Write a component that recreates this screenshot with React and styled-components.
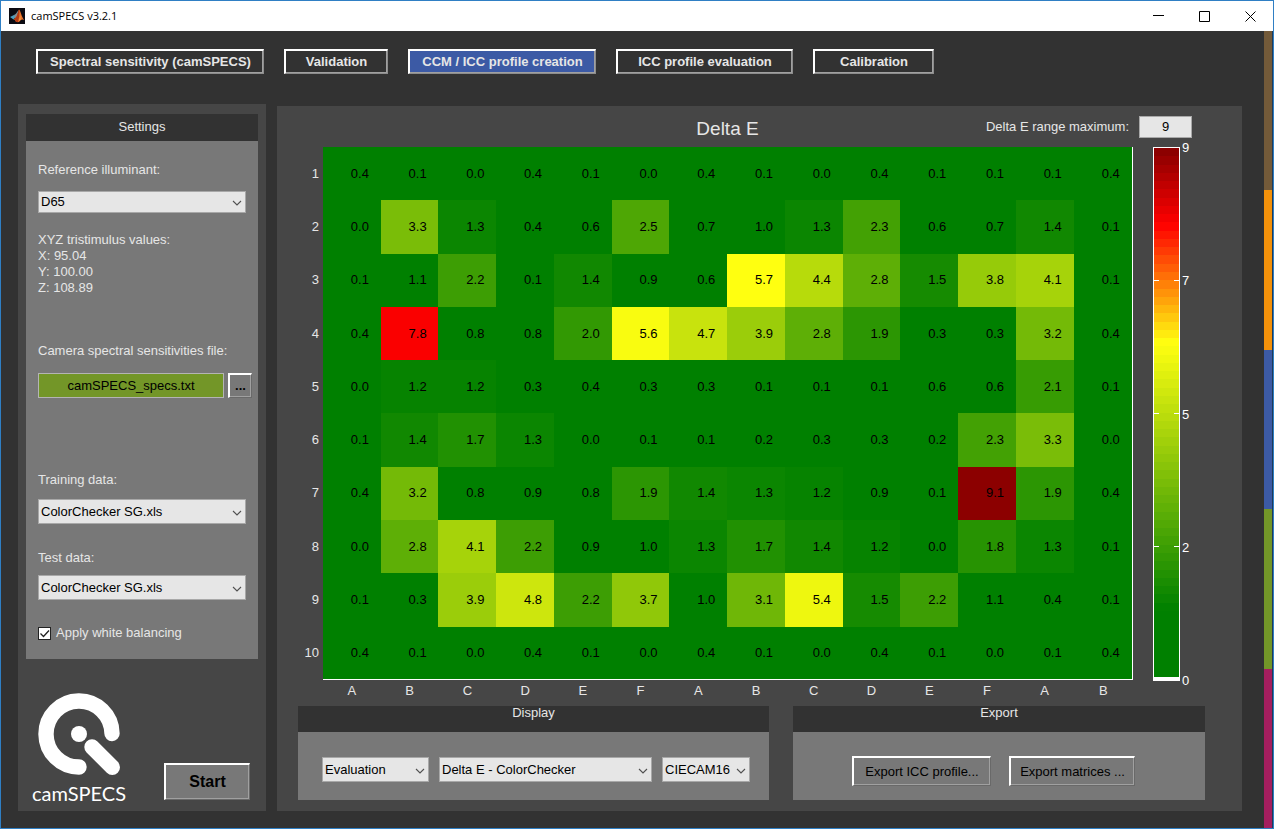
import React, { useState } from 'react'
import styled, { createGlobalStyle } from 'styled-components'

const TABS = [
  { name: 'Spectral sensitivity (camSPECS)', width: 228 },
  { name: 'Validation', width: 104 },
  { name: 'CCM / ICC profile creation', width: 188 },
  { name: 'ICC profile evaluation', width: 177 },
  { name: 'Calibration', width: 121 },
]

const COLUMNS = ['A', 'B', 'C', 'D', 'E', 'F', 'A', 'B', 'C', 'D', 'E', 'F', 'A', 'B']

const DELTA_E = [
  [0.4, 0.1, 0.0, 0.4, 0.1, 0.0, 0.4, 0.1, 0.0, 0.4, 0.1, 0.1, 0.1, 0.4],
  [0.0, 3.3, 1.3, 0.4, 0.6, 2.5, 0.7, 1.0, 1.3, 2.3, 0.6, 0.7, 1.4, 0.1],
  [0.1, 1.1, 2.2, 0.1, 1.4, 0.9, 0.6, 5.7, 4.4, 2.8, 1.5, 3.8, 4.1, 0.1],
  [0.4, 7.8, 0.8, 0.8, 2.0, 5.6, 4.7, 3.9, 2.8, 1.9, 0.3, 0.3, 3.2, 0.4],
  [0.0, 1.2, 1.2, 0.3, 0.4, 0.3, 0.3, 0.1, 0.1, 0.1, 0.6, 0.6, 2.1, 0.1],
  [0.1, 1.4, 1.7, 1.3, 0.0, 0.1, 0.1, 0.2, 0.3, 0.3, 0.2, 2.3, 3.3, 0.0],
  [0.4, 3.2, 0.8, 0.9, 0.8, 1.9, 1.4, 1.3, 1.2, 0.9, 0.1, 9.1, 1.9, 0.4],
  [0.0, 2.8, 4.1, 2.2, 0.9, 1.0, 1.3, 1.7, 1.4, 1.2, 0.0, 1.8, 1.3, 0.1],
  [0.1, 0.3, 3.9, 4.8, 2.2, 3.7, 1.0, 3.1, 5.4, 1.5, 2.2, 1.1, 0.4, 0.1],
  [0.4, 0.1, 0.0, 0.4, 0.1, 0.0, 0.4, 0.1, 0.0, 0.4, 0.1, 0.0, 0.1, 0.4],
]

const TICKS = [9, 7, 5, 2, 0]
const STEPS = 64

// green -> yellow -> red -> dark red, stops are given for a range of 0..9
const STOPS = [
  [0, [0, 128, 0]],
  [1.1, [0, 128, 0]],
  [5.7, [255, 255, 16]],
  [7.75, [255, 0, 0]],
  [9, [140, 0, 0]],
]

function heat(value) {
  const v = Math.min(Math.max(value, 0), 9)
  const i = Math.max(1, STOPS.findIndex(([at]) => v <= at))
  const [from, a] = STOPS[i - 1]
  const [to, b] = STOPS[i]
  const t = (v - from) / (to - from)
  return `rgb(${a.map((c, n) => Math.round(c + (b[n] - c) * t)).join(',')})`
}

const BANDS = Array.from({ length: STEPS }, (_, i) => heat(9 - (i * 9) / (STEPS - 1)))

function Dropdown({ id, label, options, height, width }) {
  return (
    <SelectBox $width={width}>
      <Select id={id} aria-label={label} $height={height}>
        {options.map((o) => <option key={o}>{o}</option>)}
      </Select>
      <Chevron viewBox="0 0 10 6" aria-hidden="true">
        <path d="M1 1l4 4 4-4" fill="none" stroke="#505050" strokeWidth="1.1" />
      </Chevron>
    </SelectBox>
  )
}

function TitleBar() {
  return (
    <Bar>
      <svg width="16" height="16" viewBox="0 0 16 16" aria-hidden="true">
        <rect width="16" height="16" fill="#0b0b12" />
        <path d="M1 9l4-2 2 1.500-2.500 3z" fill="#4d9fc0" />
        <path d="M5 7c2-.5 3-3 4.500-5L8 9l-2 2z" fill="#7d8e98" />
        <path d="M10 1.500c1.500 1 2.500 7 5 10.500-2-1.200-3-.6-4.500 1.500C9.500 14.500 8.500 14 7 14c-.4-1.500-1.200-2.200-2.500-2.500C8 9.500 8.800 5 10 1.500z" fill="#e8702a" />
        <path d="M10 1.500c.9 2 .5 7-1 12.500-.6.200-1.200 0-2 0-.4-1.500-1.200-2.200-2.500-2.500C8 9.500 8.800 5 10 1.500z" fill="#b23a14" />
        <path d="M10.500 4c.8 3 .7 6-.5 9l1.500-1.500c-.1-2.500-.2-5-1-7.500z" fill="#f9b64a" />
      </svg>
      <AppName>camSPECS v3.2.1</AppName>
      <WindowButton aria-label="Minimize">
        <svg width="11" height="11" viewBox="0 0 11 11"><path d="M0 4.500h11" stroke="#000" /></svg>
      </WindowButton>
      <WindowButton aria-label="Maximize">
        <svg width="11" height="11" viewBox="0 0 11 11"><path d="M.5.5h10v10H.5z" fill="none" stroke="#000" /></svg>
      </WindowButton>
      <WindowButton aria-label="Close">
        <svg width="11" height="11" viewBox="0 0 11 11"><path d="M.5.5l10 10M10.500.5l-10 10" stroke="#000" /></svg>
      </WindowButton>
    </Bar>
  )
}

function Settings() {
  const [balance, setBalance] = useState(true)

  return (
    <Sidebar>
      <GroupHeader $height={27} $line={25}>Settings</GroupHeader>
      <SettingsBody>
        <Field $top={21} $gap={13}>
          <label htmlFor="illuminant">Reference illuminant:</label>
          <Dropdown id="illuminant" options={['D65', 'D50', 'A']} height={22} />
        </Field>
        <Field $top={19}>
          <div>XYZ tristimulus values:</div>
          <div>X: 95.04</div>
          <div>Y: 100.00</div>
          <div>Z: 108.89</div>
        </Field>
        <Field $top={47} $gap={14}>
          <label htmlFor="specs">Camera spectral sensitivities file:</label>
          <FileRow>
            <FileInput id="specs" readOnly value="camSPECS_specs.txt" />
            <BrowseButton aria-label="Browse">...</BrowseButton>
          </FileRow>
        </Field>
        <Field $top={74} $gap={11}>
          <label htmlFor="training">Training data:</label>
          <Dropdown id="training" options={['ColorChecker SG.xls']} height={25} />
        </Field>
        <Field $top={26} $gap={9}>
          <label htmlFor="test">Test data:</label>
          <Dropdown id="test" options={['ColorChecker SG.xls']} height={25} />
        </Field>
        <CheckRow>
          <Check type="checkbox" checked={balance} onChange={(e) => setBalance(e.target.checked)} />
          {balance && (
            <Tick viewBox="0 0 13 13" aria-hidden="true">
              <path d="M2.500 6.500l3 3 5.500-6" fill="none" stroke="#222" strokeWidth="1.300" />
            </Tick>
          )}
          Apply white balancing
        </CheckRow>
      </SettingsBody>
      <SidebarFooter>
        <Logo>
          <svg width="84" height="84" viewBox="0 0 84 84" aria-hidden="true">
            <g fill="none" stroke="#fff" strokeWidth="15.400" strokeLinecap="round">
              <path d="M75 41.500A33 33 0 1 0 42 75" />
              <path d="M55 55l20.300 20.300" />
            </g>
            <circle cx="42" cy="42" r="8" fill="#fff" />
          </svg>
          camSPECS
        </Logo>
        <StartButton>Start</StartButton>
      </SidebarFooter>
    </Sidebar>
  )
}

function Heatmap() {
  return (
    <Table>
      <tbody>
        {DELTA_E.map((row, r) => (
          <tr key={r}>
            <RowLabel scope="row">{r + 1}</RowLabel>
            {row.map((value, c) => (
              <Cell key={c} style={{ backgroundColor: heat(value) }}>{value.toFixed(1)}</Cell>
            ))}
          </tr>
        ))}
      </tbody>
      <tfoot>
        <tr>
          <ColumnLabel as="td" />
          {COLUMNS.map((name, c) => <ColumnLabel key={c} scope="col">{name}</ColumnLabel>)}
        </tr>
      </tfoot>
    </Table>
  )
}

function ColorScale() {
  return (
    <Scale>
      <ScaleBar>
        {BANDS.map((color, i) => <Band key={i} style={{ backgroundColor: color }} />)}
        <Marks>
          {TICKS.map((t) => <Mark key={t} />)}
        </Marks>
      </ScaleBar>
      <ScaleLabels>
        {TICKS.map((t) => <span key={t}>{t}</span>)}
      </ScaleLabels>
    </Scale>
  )
}

export default function App() {
  const [tab, setTab] = useState('CCM / ICC profile creation')
  const [max, setMax] = useState('9')

  return (
    <Window>
      <GlobalStyle />
      <TitleBar />
      <Client>
        <Content>
          <Nav>
            {TABS.map(({ name, width }) => (
              <Tab key={name} $width={width} $active={name === tab} onClick={() => setTab(name)}>
                {name}
              </Tab>
            ))}
          </Nav>
          <Panels>
            <Settings />
            <Main>
              <PlotHeader>
                <PlotTitle>Delta E</PlotTitle>
                <RangeLabel htmlFor="range">Delta E range maximum:</RangeLabel>
                <RangeInput id="range" value={max} onChange={(e) => setMax(e.target.value)} />
              </PlotHeader>
              <Plot>
                <Heatmap />
                <ColorScale />
              </Plot>
              <Groups>
                <Group $grow={471}>
                  <GroupHeader $height={26} $line={14}>Display</GroupHeader>
                  <DisplayBody>
                    <Dropdown label="Mode" options={['Evaluation']} height={25} width={107} />
                    <Dropdown label="Plot" options={['Delta E - ColorChecker']} height={25} width={213} />
                    <Dropdown label="Color model" options={['CIECAM16']} height={25} width={88} />
                  </DisplayBody>
                </Group>
                <Group $grow={412}>
                  <GroupHeader $height={26} $line={14}>Export</GroupHeader>
                  <ExportBody>
                    <ExportButton $width={139}>Export ICC profile...</ExportButton>
                    <ExportButton $width={126}>Export matrices ...</ExportButton>
                  </ExportBody>
                </Group>
              </Groups>
            </Main>
          </Panels>
        </Content>
        <Stripes>
          <Stripe $color="#735a39" />
          <Stripe $color="#f5920a" />
          <Stripe $color="#3c5aa5" />
          <Stripe $color="#739628" />
          <Stripe $color="#a51e5f" />
        </Stripes>
      </Client>
    </Window>
  )
}

const GlobalStyle = createGlobalStyle`
  * {
    box-sizing: border-box;
  }

  body {
    margin: 0;
    font-family: "Liberation Sans", Arial, sans-serif;
    font-size: 13px;
    line-height: 16px;
    color: #e6e6e6;
    background: #323232;
  }

  button, input, select {
    font: inherit;
    margin: 0;
    border-radius: 0;
  }
`

const Window = styled.div`
  display: flex;
  flex-direction: column;
  min-height: 100vh;
  border: 1px solid #2f7fc4;
`

const Bar = styled.header`
  display: flex;
  align-items: center;
  height: 30px;
  padding-left: 8px;
  background: #fff;
  color: #000;
`

const AppName = styled.span`
  flex: 1;
  margin-left: 6px;
  font-family: "Open Sans", "Noto Sans", sans-serif;
  font-size: 11px;
`

const WindowButton = styled.button`
  display: flex;
  align-items: center;
  justify-content: center;
  width: 46px;
  height: 28px;
  padding: 0;
  border: none;
  background: none;
`

const Client = styled.div`
  flex: 1;
  display: flex;
`

const Content = styled.div`
  flex: 1;
  display: flex;
  flex-direction: column;
  padding: 18px 22px 17px 17px;
`

const Nav = styled.nav`
  display: flex;
  gap: 20px;
  margin-left: 18px;
  margin-bottom: 30px;
`

const RaisedButton = styled.button`
  padding: 0;
  border: 2px solid #fff;
  border-right: 1px solid #696969;
  border-bottom: 1px solid #696969;
  box-shadow: inset -1px -1px #a0a0a0;
  background: #787878;
  color: #000;
  white-space: nowrap;
`

const Tab = styled(RaisedButton)`
  width: ${(p) => p.$width}px;
  height: 25px;
  border-right-color: #8c8c8c;
  border-bottom-color: #8c8c8c;
  background: ${(p) => (p.$active ? '#3c5aa5' : '#323232')};
  color: #e6e6e6;
  font-weight: bold;
`

const Panels = styled.div`
  flex: 1;
  display: flex;
  gap: 11px;
`

const Sidebar = styled.aside`
  display: flex;
  flex-direction: column;
  flex: none;
  width: 248px;
  padding: 10px 8px 8px;
  background: #464646;
`

const GroupHeader = styled.h2`
  height: ${(p) => p.$height}px;
  margin: 0;
  background: #323232;
  font-size: 13px;
  font-weight: normal;
  line-height: ${(p) => p.$line}px;
  text-align: center;
`

const SettingsBody = styled.div`
  padding: 0 12px 18px;
  background: #787878;
`

const Field = styled.div`
  display: flex;
  flex-direction: column;
  gap: ${(p) => p.$gap || 0}px;
  padding-top: ${(p) => p.$top}px;
`

const SelectBox = styled.div`
  position: relative;
  ${(p) => p.$width && `width: ${p.$width}px;`}
`

const Select = styled.select`
  display: block;
  width: 100%;
  height: ${(p) => p.$height}px;
  padding: 0 18px 0 2px;
  border: 1px solid #a8a8a8;
  appearance: none;
  background: #e6e6e6;
  color: #000;
`

const Chevron = styled.svg`
  position: absolute;
  top: 50%;
  right: 4px;
  width: 10px;
  height: 6px;
  margin-top: -2px;
  pointer-events: none;
`

const FileRow = styled.div`
  display: flex;
  gap: 4px;
  margin-right: -6px;
`

const FileInput = styled.input`
  flex: 1;
  min-width: 0;
  height: 25px;
  padding: 0;
  border: 1px solid #b4b4b4;
  background: #739628;
  color: #000;
  text-align: center;
`

const BrowseButton = styled(RaisedButton)`
  width: 24px;
  height: 25px;
  font-weight: bold;
`

const CheckRow = styled.label`
  position: relative;
  display: flex;
  align-items: center;
  gap: 5px;
  margin-top: 25px;
`

const Check = styled.input`
  width: 13px;
  height: 13px;
  border: 1px solid #222;
  appearance: none;
  background: #fff;
`

const Tick = styled.svg`
  position: absolute;
  left: 0;
  width: 13px;
  height: 13px;
  pointer-events: none;
`

const SidebarFooter = styled.div`
  display: flex;
  align-items: flex-end;
  justify-content: space-between;
  margin-top: auto;
  padding: 24px 8px 0 6px;
`

const Logo = styled.div`
  display: flex;
  flex-direction: column;
  align-items: center;
  gap: 7px;
  color: #fff;
  font-family: Lato, sans-serif;
  font-size: 20px;
  line-height: 20px;
`

const StartButton = styled(RaisedButton)`
  width: 86px;
  height: 37px;
  margin-bottom: 3px;
  font-size: 16px;
  font-weight: bold;
`

const Main = styled.main`
  flex: 1;
  display: flex;
  flex-direction: column;
  margin-top: 2px;
  background: #464646;
`

const PlotHeader = styled.div`
  display: grid;
  grid-template-columns: 1fr auto 1fr 110px;
  align-items: center;
  height: 41px;
  padding-left: 46px;
`

const PlotTitle = styled.h1`
  grid-column: 2;
  margin: 4px 0 0;
  font-size: 19px;
  font-weight: normal;
  line-height: 20px;
`

const RangeLabel = styled.label`
  justify-self: end;
  margin-right: 3px;
`

const RangeInput = styled.input`
  width: 53px;
  height: 22px;
  margin-left: 7px;
  padding: 0;
  border: 1px solid #a8a8a8;
  background: #e6e6e6;
  color: #000;
  text-align: center;
`

const Plot = styled.div`
  flex: 1;
  display: flex;
`

const Table = styled.table`
  flex: 1;
  table-layout: fixed;
  border-spacing: 0;

  tbody tr:last-child td {
    border-bottom: 1px solid #fff;
  }

  tbody td:last-child {
    border-right: 1px solid #fff;
  }
`

const RowLabel = styled.th`
  width: 46px;
  padding: 0 4px 0 0;
  font-weight: normal;
  text-align: right;
`

const Cell = styled.td`
  height: 53px;
  padding: 0 0 0 16px;
  color: #000;
  text-align: center;
`

const ColumnLabel = styled.th`
  height: 26px;
  padding: 3px 0 0;
  font-weight: normal;
  vertical-align: top;
`

const Scale = styled.div`
  display: flex;
  gap: 2px;
  width: 109px;
  padding-left: 20px;
  padding-bottom: 25px;
`

const ScaleBar = styled.div`
  position: relative;
  display: flex;
  flex-direction: column;
  width: 27px;
  border: 1px solid #fff;
  border-bottom-width: 4px;
`

const Band = styled.div`
  flex: 1;
`

const Marks = styled.div`
  position: absolute;
  inset: -1px 0 -3px;
  display: flex;
  flex-direction: column;
  justify-content: space-between;
`

const Mark = styled.div`
  height: 1px;
  border: solid #fff;
  border-width: 0 5px;
`

const ScaleLabels = styled.div`
  display: flex;
  flex-direction: column;
  justify-content: space-between;
  color: #fff;
  line-height: 1px;
`

const Groups = styled.div`
  display: flex;
  gap: 24px;
  padding: 0 37px 11px 21px;
`

const Group = styled.section`
  flex: ${(p) => p.$grow} 1 0;
  display: flex;
  flex-direction: column;
`

const DisplayBody = styled.div`
  display: flex;
  gap: 10px;
  align-items: center;
  height: 68px;
  padding: 7px 0 0 24px;
  background: #787878;
`

const ExportBody = styled.div`
  display: flex;
  gap: 18px;
  align-items: center;
  height: 68px;
  padding: 10px 0 0 59px;
  background: #787878;
`

const ExportButton = styled(RaisedButton)`
  width: ${(p) => p.$width}px;
  height: 30px;
`

const Stripes = styled.div`
  display: flex;
  flex-direction: column;
  width: 9px;
  border-right: 1px solid #1e3a5a;
`

const Stripe = styled.div`
  flex: 1;
  background: ${(p) => p.$color};
`
